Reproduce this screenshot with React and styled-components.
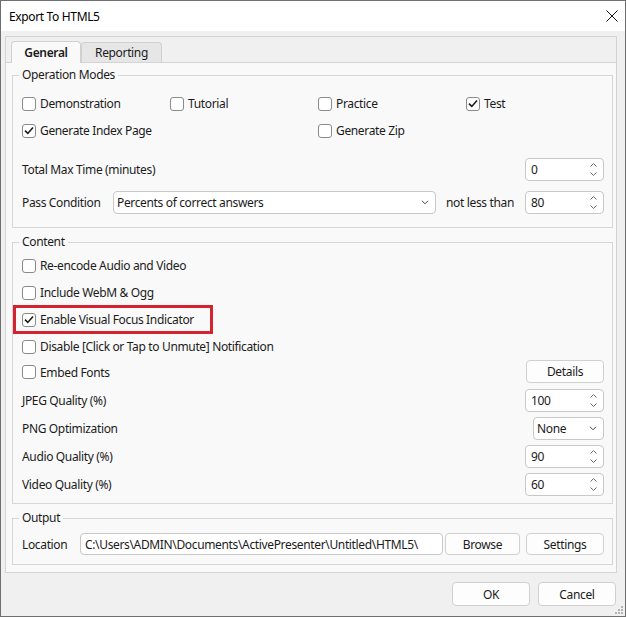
import React from 'react';
import styled, { createGlobalStyle } from 'styled-components';

const GlobalStyle = createGlobalStyle`
  html, body {
    margin: 0;
    padding: 0;
    background: #ffffff;
  }
  body {
    font-family: "Noto Sans", "Open Sans", sans-serif;
    font-size: 12px;
    letter-spacing: -0.35px;
    color: #1b1b1b;
  }
  *, *::before, *::after {
    box-sizing: border-box;
  }
`;

const Window = styled.div`
  position: relative;
  width: 626px;
  height: 617px;
  border: 1px solid #6f6f6f;
  background: #f0f0f0;
  display: flex;
  flex-direction: column;
`;

const TitleBar = styled.div`
  height: 30px;
  flex-shrink: 0;
  background: #ffffff;
  display: flex;
  align-items: center;
  padding-left: 8px;
`;

const Title = styled.div`
  flex: 1;
  color: #000;
`;

const CloseButton = styled.button`
  width: 26px;
  height: 30px;
  padding: 0;
  border: none;
  background: transparent;
  display: flex;
  align-items: center;
  justify-content: center;
`;

const Body = styled.div`
  padding: 5px 8px 0 4px;
`;

const TabWidget = styled.div`
  border: 1px solid #d3d3d3;
  background: #f9f9f9;
`;

const TabBar = styled.div`
  height: 26px;
  display: flex;
  align-items: flex-end;
  padding-left: 5px;
  background: #f0f0f0;
  border-bottom: 1px solid #d3d3d3;
`;

const Tab = styled.div`
  width: ${p => p.width}px;
  height: ${p => (p.active ? 22 : 20)}px;
  margin-bottom: ${p => (p.active ? -1 : 0)}px;
  display: flex;
  align-items: center;
  justify-content: center;
  border: 1px solid #d0d0d0;
  border-bottom: none;
  border-radius: 4px 4px 0 0;
  background: ${p => (p.active ? '#f9f9f9' : '#e6e6e6')};
  font-weight: ${p => (p.active ? 600 : 400)};
  color: #1b1b1b;
`;

const Pane = styled.div`
  padding: 4px 3px 7px 6px;
`;

const GroupBox = styled.fieldset`
  margin: 0 0 ${p => p.gap || 0}px 0;
  min-width: 0;
  border: 1px solid #d6d6d6;
  padding: ${p => p.top}px 8px ${p => p.bottom}px 9px;
`;

const Legend = styled.legend`
  padding: 0 3px;
  margin-left: -3px;
  line-height: 16px;
  color: #1b1b1b;
`;

const ModeGrid = styled.div`
  display: grid;
  grid-template-columns: 148px 148px 148px 1fr;
  grid-auto-rows: 27px;
`;

const CheckRow = styled.label`
  position: relative;
  height: ${p => p.h || 27}px;
  display: flex;
  align-items: center;
  gap: 4px;
  grid-column: ${p => p.col || 'auto'};

  ${p => p.marked && `
    &::after {
      content: '';
      position: absolute;
      left: -9px;
      top: -1px;
      width: 200px;
      height: 29px;
      border: 3px solid #d4232f;
      pointer-events: none;
    }
  `}
`;

const Box = styled.span`
  width: 14px;
  height: 14px;
  flex-shrink: 0;
  border: 1px solid #8a8a8a;
  border-radius: 3px;
  background: #ffffff;
  display: flex;
  align-items: center;
  justify-content: center;
`;

const FormRow = styled.div`
  height: ${p => p.h || 25}px;
  margin-top: ${p => p.mt || 0}px;
  display: flex;
  align-items: ${p => p.align || 'center'};
`;

const FieldLabel = styled.span`
  width: ${p => (p.w ? `${p.w}px` : 'auto')};
  flex-shrink: 0;
  margin-left: ${p => p.ml || 0}px;
`;

const Spin = styled.div`
  width: 79px;
  height: 23px;
  margin-left: auto;
  flex-shrink: 0;
  border: 1px solid #c8c8c8;
  border-radius: 4px;
  background: #ffffff;
  display: flex;
  align-items: center;
  padding: 0 5px 0 5px;
`;

const SpinValue = styled.span`
  flex: 1;
`;

const SpinArrows = styled.span`
  display: flex;
  flex-direction: column;
  align-items: center;
  gap: 5px;
  margin-right: 1px;
`;

const Combo = styled.div`
  width: ${p => p.w}px;
  height: 23px;
  margin-left: ${p => (p.right ? 'auto' : '0')};
  flex-shrink: 0;
  border: 1px solid #c8c8c8;
  border-radius: 4px;
  background: #ffffff;
  display: flex;
  align-items: center;
  padding: 0 6px 0 3px;
`;

const ComboText = styled.span`
  flex: 1;
`;

const TextField = styled.div`
  flex: 1;
  height: 22px;
  border: 1px solid #c8c8c8;
  border-radius: 4px;
  background: #ffffff;
  display: flex;
  align-items: center;
  padding-left: 4px;
  white-space: nowrap;
  overflow: hidden;
`;

const Button = styled.button`
  width: ${p => p.w || 78}px;
  height: ${p => p.h || 23}px;
  margin-left: ${p => (p.ml === 'auto' ? 'auto' : `${p.ml || 0}px`)};
  flex-shrink: 0;
  padding: 0;
  border: 1px solid #d0d0d0;
  border-radius: 4px;
  background: #fdfdfd;
  font-family: inherit;
  font-size: 12px;
  letter-spacing: inherit;
  color: #1b1b1b;
`;

const Footer = styled.div`
  display: flex;
  justify-content: flex-end;
  gap: 8px;
  padding: 9px 9px 0 0;
`;

const Grip = styled.svg`
  position: absolute;
  right: 1px;
  bottom: 1px;
`;

const Check = ({ checked }) => (
  <Box>
    {checked && (
      <svg width="10" height="9" viewBox="0 0 10 9">
        <path d="M1 4.6 L3.8 7.4 L9 1.4" fill="none" stroke="#1a1a1a" strokeWidth="1.6" />
      </svg>
    )}
  </Box>
);

const CheckBox = ({ label, checked, col, h, marked }) => (
  <CheckRow col={col} h={h} marked={marked}>
    <Check checked={checked} />
    {label}
  </CheckRow>
);

const SpinBox = ({ value }) => (
  <Spin>
    <SpinValue>{value}</SpinValue>
    <SpinArrows>
      <svg width="7" height="4" viewBox="0 0 7 4">
        <path d="M0.5 3.5 L3.5 0.6 L6.5 3.5" fill="none" stroke="#6a6a6a" strokeWidth="1" />
      </svg>
      <svg width="7" height="4" viewBox="0 0 7 4">
        <path d="M0.5 0.5 L3.5 3.4 L6.5 0.5" fill="none" stroke="#6a6a6a" strokeWidth="1" />
      </svg>
    </SpinArrows>
  </Spin>
);

const ComboBox = ({ value, w, right }) => (
  <Combo w={w} right={right}>
    <ComboText>{value}</ComboText>
    <svg width="8" height="5" viewBox="0 0 8 5">
      <path d="M1 0.8 L4 3.8 L7 0.8" fill="none" stroke="#444" strokeWidth="1" />
    </svg>
  </Combo>
);

const App = () => (
  <>
    <GlobalStyle />
    <Window>
      <TitleBar>
        <Title>Export To HTML5</Title>
        <CloseButton>
          <svg width="12" height="12" viewBox="0 0 12 12">
            <path d="M0.5 0.5 L11.5 11.5 M11.5 0.5 L0.5 11.5" stroke="#111" strokeWidth="1" />
          </svg>
        </CloseButton>
      </TitleBar>

      <Body>
        <TabWidget>
          <TabBar>
            <Tab active width={70}>General</Tab>
            <Tab width={81}>Reporting</Tab>
          </TabBar>

          <Pane>
            <GroupBox top={7} bottom={12} gap={6}>
              <Legend>Operation Modes</Legend>
              <ModeGrid>
                <CheckBox label="Demonstration" />
                <CheckBox label="Tutorial" />
                <CheckBox label="Practice" />
                <CheckBox label="Test" checked />
                <CheckBox label="Generate Index Page" checked col="1" />
                <CheckBox label="Generate Zip" col="3" />
              </ModeGrid>
              <FormRow mt={13}>
                <FieldLabel>Total Max Time (minutes)</FieldLabel>
                <SpinBox value="0" />
              </FormRow>
              <FormRow mt={8}>
                <FieldLabel w={91}>Pass Condition</FieldLabel>
                <ComboBox value="Percents of correct answers" w={323} />
                <FieldLabel ml={10}>not less than</FieldLabel>
                <SpinBox value="80" />
              </FormRow>
            </GroupBox>

            <GroupBox top={2} bottom={5} gap={6}>
              <Legend>Content</Legend>
              <CheckBox label="Re-encode Audio and Video" />
              <CheckBox label="Include WebM &amp; Ogg" />
              <CheckBox label="Enable Visual Focus Indicator" checked marked />
              <CheckBox label="Disable [Click or Tap to Unmute] Notification" />
              <FormRow h={26} align="flex-start">
                <CheckBox label="Embed Fonts" h={24} />
                <Button ml="auto">Details</Button>
              </FormRow>
              <FormRow h={28}>
                <FieldLabel>JPEG Quality (%)</FieldLabel>
                <SpinBox value="100" />
              </FormRow>
              <FormRow h={28}>
                <FieldLabel>PNG Optimization</FieldLabel>
                <ComboBox value="None" w={71} right />
              </FormRow>
              <FormRow h={28}>
                <FieldLabel>Audio Quality (%)</FieldLabel>
                <SpinBox value="90" />
              </FormRow>
              <FormRow h={28}>
                <FieldLabel>Video Quality (%)</FieldLabel>
                <SpinBox value="60" />
              </FormRow>
            </GroupBox>

            <GroupBox top={6} bottom={8}>
              <Legend>Output</Legend>
              <FormRow h={24}>
                <FieldLabel w={58}>Location</FieldLabel>
                <TextField>C:\Users\ADMIN\Documents\ActivePresenter\Untitled\HTML5\</TextField>
                <Button w={75} h={22} ml={2}>Browse</Button>
                <Button w={78} h={22} ml={6}>Settings</Button>
              </FormRow>
            </GroupBox>
          </Pane>
        </TabWidget>
      </Body>

      <Footer>
        <Button w={78} h={24}>OK</Button>
        <Button w={78} h={24}>Cancel</Button>
      </Footer>

      <Grip width="10" height="10" viewBox="0 0 10 10">
        <rect x="7" y="1" width="2" height="2" fill="#b4b4b4" />
        <rect x="4" y="4" width="2" height="2" fill="#b4b4b4" />
        <rect x="7" y="4" width="2" height="2" fill="#b4b4b4" />
        <rect x="1" y="7" width="2" height="2" fill="#b4b4b4" />
        <rect x="4" y="7" width="2" height="2" fill="#b4b4b4" />
        <rect x="7" y="7" width="2" height="2" fill="#b4b4b4" />
      </Grip>
    </Window>
  </>
);

export default App;
